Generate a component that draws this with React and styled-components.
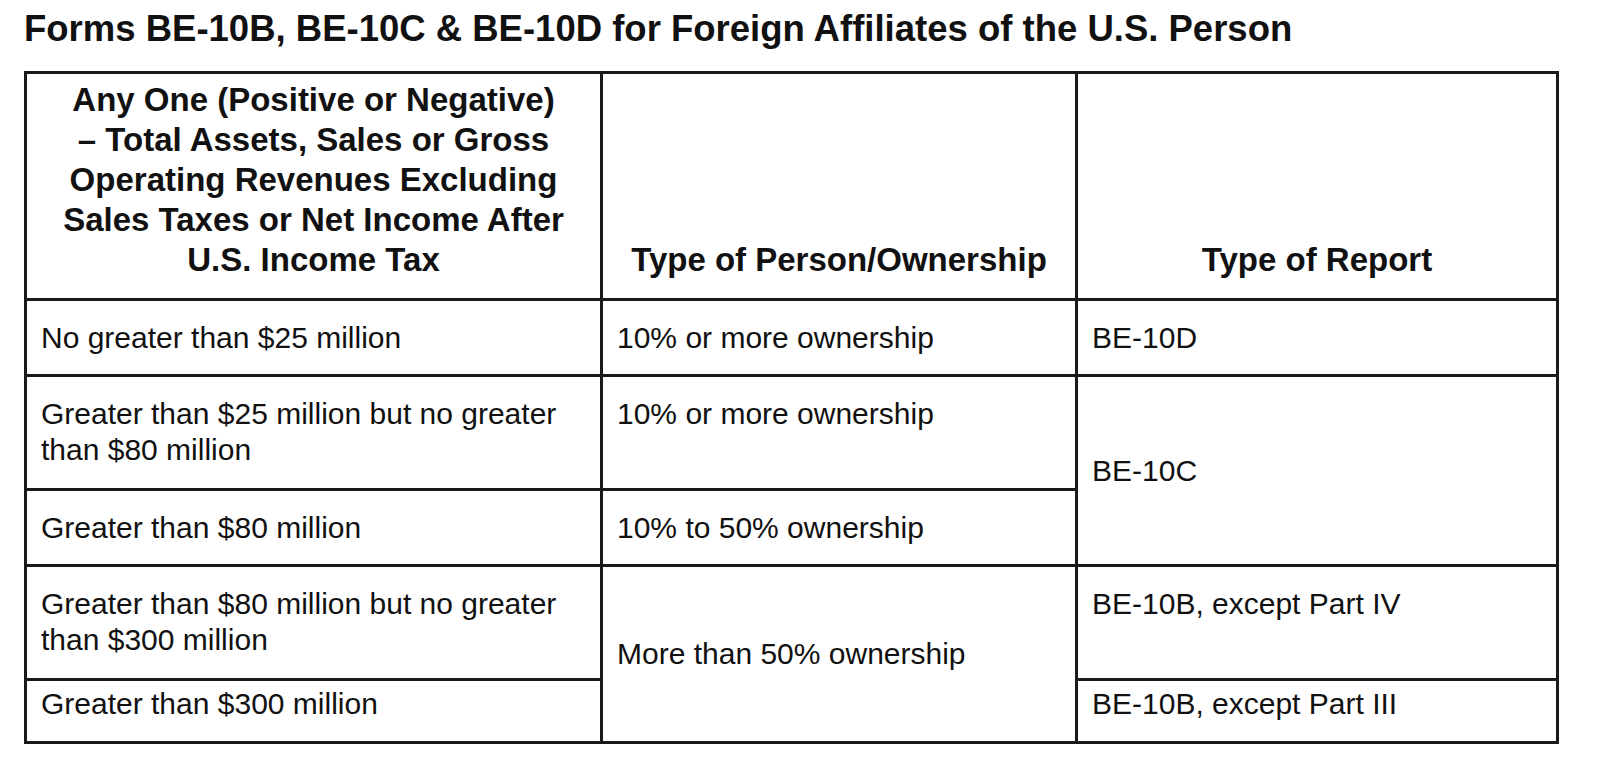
import styled, { createGlobalStyle } from "styled-components";

const GlobalStyle = createGlobalStyle`
  html, body {
    margin: 0;
    padding: 0;
    background: #fff;
  }
  body {
    font-family: "Liberation Sans", Arial, sans-serif;
    color: #111;
  }
`;

const Page = styled.div`
  width: 1600px;
  height: 780px;
  padding: 9px 0 0 24px;
  box-sizing: border-box;
  background: #fff;
`;

const Title = styled.h1`
  margin: 0 0 22px;
  font-size: 36.5px;
  line-height: 40px;
  font-weight: 700;
  color: #111;
  white-space: nowrap;
`;

const Table = styled.table`
  width: 1532px;
  border-collapse: collapse;
  table-layout: fixed;
  border: 3px solid #1a1a1a;
`;

const Row = styled.tr`
  height: ${(p) => p.$h}px;
`;

const HeadCell = styled.th`
  border: 3px solid #1a1a1a;
  padding: 0 12px 18px;
  vertical-align: bottom;
  text-align: center;
  font-size: 33px;
  line-height: 40px;
  font-weight: 700;
  color: #111;
  white-space: nowrap;
`;

const Cell = styled.td`
  border: 3px solid #1a1a1a;
  padding: ${(p) => (p.$middle ? 0 : p.$top ?? 19)}px 14px 0 14px;
  vertical-align: ${(p) => (p.$middle ? "middle" : "top")};
  font-size: 30px;
  line-height: 36px;
  font-weight: 400;
  color: #111;
`;

const rows = [
  { h: 76, amount: "No greater than $25 million", type: "10% or more ownership", report: "BE-10D" },
  {
    h: 114,
    amount: "Greater than $25 million but no greater than $80 million",
    type: "10% or more ownership",
    report: "BE-10C",
    reportSpan: 2,
  },
  { h: 76, amount: "Greater than $80 million", type: "10% to 50% ownership" },
  {
    h: 114,
    amount: "Greater than $80 million but no greater than $300 million",
    type: "More than 50% ownership",
    typeSpan: 2,
    report: "BE-10B, except Part IV",
  },
  { h: 63, top: 5, amount: "Greater than $300 million", report: "BE-10B, except Part III" },
];

export default function App() {
  return (
    <>
      <GlobalStyle />
      <Page>
        <Title>Forms BE-10B, BE-10C &amp; BE-10D for Foreign Affiliates of the U.S. Person</Title>
        <Table>
          <colgroup>
            <col style={{ width: 576 }} />
            <col style={{ width: 475 }} />
            <col style={{ width: 481 }} />
          </colgroup>
          <thead>
            <Row $h={227}>
              <HeadCell>
                Any One (Positive or Negative)
                <br />– Total Assets, Sales or Gross
                <br />
                Operating Revenues Excluding
                <br />
                Sales Taxes or Net Income After
                <br />
                U.S. Income Tax
              </HeadCell>
              <HeadCell>Type of Person/Ownership</HeadCell>
              <HeadCell>Type of Report</HeadCell>
            </Row>
          </thead>
          <tbody>
            {rows.map((r, i) => (
              <Row key={i} $h={r.h}>
                <Cell $top={r.top}>{r.amount}</Cell>
                {r.type && (
                  <Cell rowSpan={r.typeSpan} $middle={!!r.typeSpan} $top={r.top}>
                    {r.type}
                  </Cell>
                )}
                {r.report && (
                  <Cell rowSpan={r.reportSpan} $middle={!!r.reportSpan} $top={r.top}>
                    {r.report}
                  </Cell>
                )}
              </Row>
            ))}
          </tbody>
        </Table>
      </Page>
    </>
  );
}
